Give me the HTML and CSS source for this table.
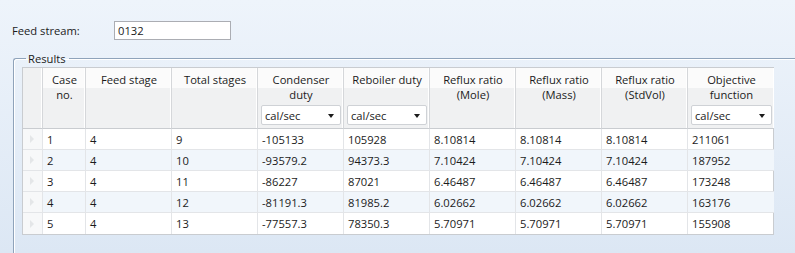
FILE: index.html
```html
<!DOCTYPE html>
<html>
<head>
    <title>Feed stage optimization</title>
    <link rel="stylesheet" href="styles.css">
</head>
<body>
    <div class="feed-row">
        <label class="feed-label">Feed stream:</label>
        <div class="text-box">0132</div>
    </div>

    <fieldset class="group-box">
        <legend>Results</legend>
        <div class="data-grid">
            <!-- header -->
            <div class="col-head corner"></div>
            <div class="col-head"><span class="title">Case<br>no.</span></div>
            <div class="col-head"><span class="title">Feed stage</span></div>
            <div class="col-head"><span class="title">Total stages</span></div>
            <div class="col-head">
                <span class="title">Condenser<br>duty</span>
                <div class="unit-select">cal/sec<span class="arrow"></span></div>
            </div>
            <div class="col-head">
                <span class="title">Reboiler duty</span>
                <div class="unit-select">cal/sec<span class="arrow"></span></div>
            </div>
            <div class="col-head"><span class="title">Reflux ratio<br>(Mole)</span></div>
            <div class="col-head"><span class="title">Reflux ratio<br>(Mass)</span></div>
            <div class="col-head"><span class="title">Reflux ratio<br>(StdVol)</span></div>
            <div class="col-head">
                <span class="title">Objective<br>function</span>
                <div class="unit-select">cal/sec<span class="arrow"></span></div>
            </div>

            <!-- rows -->
            <div class="row-head"><span class="marker"></span></div>
            <div class="cell">1</div><div class="cell">4</div><div class="cell">9</div>
            <div class="cell">-105133</div><div class="cell">105928</div>
            <div class="cell">8.10814</div><div class="cell">8.10814</div><div class="cell">8.10814</div>
            <div class="cell">211061</div>

            <div class="row-head"><span class="marker"></span></div>
            <div class="cell alt">2</div><div class="cell alt">4</div><div class="cell alt">10</div>
            <div class="cell alt">-93579.2</div><div class="cell alt">94373.3</div>
            <div class="cell alt">7.10424</div><div class="cell alt">7.10424</div><div class="cell alt">7.10424</div>
            <div class="cell alt">187952</div>

            <div class="row-head"><span class="marker"></span></div>
            <div class="cell">3</div><div class="cell">4</div><div class="cell">11</div>
            <div class="cell">-86227</div><div class="cell">87021</div>
            <div class="cell">6.46487</div><div class="cell">6.46487</div><div class="cell">6.46487</div>
            <div class="cell">173248</div>

            <div class="row-head"><span class="marker"></span></div>
            <div class="cell alt">4</div><div class="cell alt">4</div><div class="cell alt">12</div>
            <div class="cell alt">-81191.3</div><div class="cell alt">81985.2</div>
            <div class="cell alt">6.02662</div><div class="cell alt">6.02662</div><div class="cell alt">6.02662</div>
            <div class="cell alt">163176</div>

            <div class="row-head"><span class="marker"></span></div>
            <div class="cell">5</div><div class="cell">4</div><div class="cell">13</div>
            <div class="cell">-77557.3</div><div class="cell">78350.3</div>
            <div class="cell">5.70971</div><div class="cell">5.70971</div><div class="cell">5.70971</div>
            <div class="cell">155908</div>
        </div>
    </fieldset>
</body>
</html>
```

FILE: styles.css
```css
:root {
    --text: #1b1b1b;
    --grid-border: #c9ccd0;
    --grid-line: #e3e5e8;
    --head-top: #fbfbfb;
    --head-bottom: #f0f1f2;
    --alt-row: #f1f6fb;
    --group-line: #8fa3ba;
}

* {
    margin: 0;
    padding: 0;
    box-sizing: border-box;
}

html, body {
    height: 100%;
}

body {
    font-family: 'Open Sans', 'Noto Sans', sans-serif;
    font-size: 11.2px;
    line-height: 15px;
    color: var(--text);
    background: linear-gradient(#eef4fb, #dce7f4);
    overflow: hidden;
}

.feed-row {
    display: flex;
    align-items: center;
    padding: 21px 0 0 12px;
    height: 40px;
}

.feed-label {
    width: 102px;
}

.text-box {
    width: 117px;
    height: 19px;
    border: 1px solid #abadb3;
    background: #fff;
    padding: 1px 0 0 3px;
    line-height: 15px;
}

.group-box {
    margin: 11px 0 0 13px;
    border: 1px solid var(--group-line);
    border-right: none;
    border-bottom: none;
    border-top-left-radius: 3px;
    box-shadow: inset 1px 1px 0 #fff;
    padding: 1px 0 0 8px;
    height: 210px;
}

.group-box legend {
    margin-left: 4px;
    padding: 0 3px 0 2px;
}

.data-grid {
    display: grid;
    grid-template-columns: 20px 43px repeat(8, 86px);
    grid-template-rows: 61px repeat(5, 21px);
    width: 752px;
    border: 1px solid var(--grid-border);
    background: #fff;
}

.col-head {
    display: flex;
    flex-direction: column;
    align-items: center;
    padding: 4px 2px 3px 3px;
    background: linear-gradient(var(--head-top) 0 20px, var(--head-bottom) 20px);
    border-right: 1px solid #d5d7da;
    border-bottom: 1px solid var(--grid-border);
    box-shadow: inset -1px 0 0 #fff;
    text-align: center;
}

.col-head:nth-child(10) {
    border-right: none;
}

.corner {
    background: var(--head-bottom);
}

.unit-select {
    position: relative;
    margin-top: auto;
    align-self: stretch;
    height: 20px;
    border: 1px solid #cfd2d6;
    border-radius: 2px;
    background: #fff;
    text-align: left;
    padding: 2px 0 0 3px;
}

.arrow {
    position: absolute;
    right: 6px;
    top: 8px;
    border-left: 3.5px solid transparent;
    border-right: 3.5px solid transparent;
    border-top: 4px solid #1b1b1b;
}

.row-head {
    display: flex;
    align-items: center;
    padding-left: 7px;
    background: #f7f8f9;
    border-right: 1px solid var(--grid-line);
    border-bottom: 1px solid var(--grid-line);
}

.marker {
    border-top: 4px solid transparent;
    border-bottom: 4px solid transparent;
    border-left: 4px solid #e4e6e8;
}

.cell {
    padding: 3px 0 0 4px;
    border-right: 1px solid var(--grid-line);
    border-bottom: 1px solid var(--grid-line);
    white-space: nowrap;
}

.cell.alt {
    background: var(--alt-row);
}

.cell:nth-child(10n) {
    border-right: none;
}

.data-grid > :nth-last-child(-n+10) {
    border-bottom: none;
}
```
